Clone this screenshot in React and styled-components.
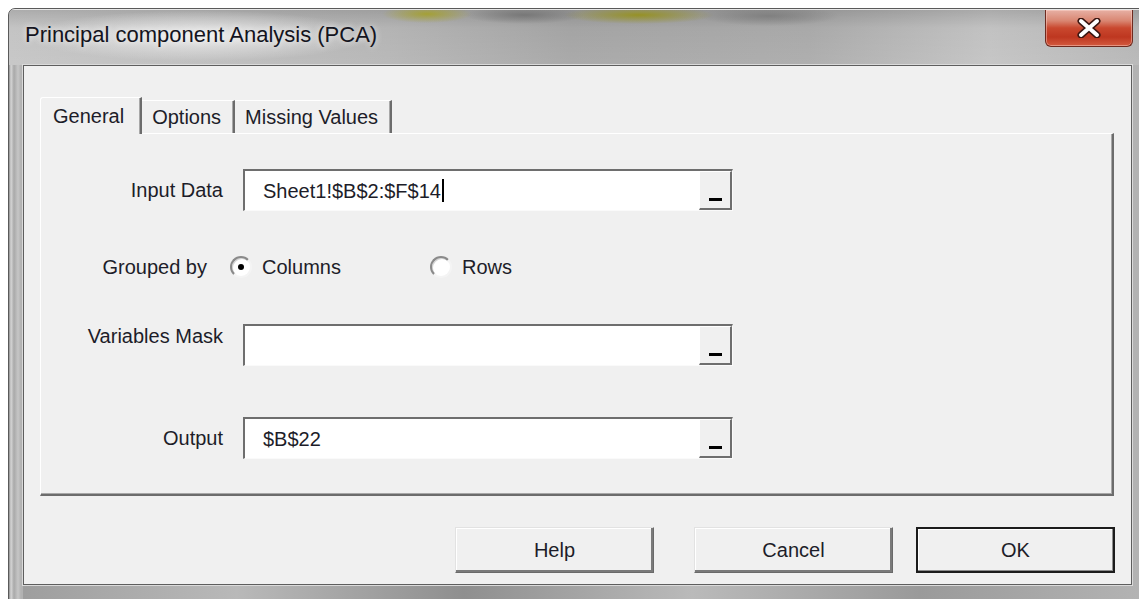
import React from "react"
import styled, {createGlobalStyle} from "styled-components"

const GlobalStyle = createGlobalStyle`
  * { box-sizing: border-box; }
  html, body {
    margin: 0;
    padding: 0;
    background: #ffffff;
    overflow: hidden;
  }
  body {
    width: 1139px;
    height: 599px;
    font-family: "Liberation Sans", Arial, sans-serif;
    color: #1d1d29;
  }
`

const Window = styled.div`
  margin: 8px 0 0 8px;
  width: 1140px;
  height: 600px;
  border: 1px solid #5a5a5a;
  border-radius: 7px 7px 0 0;
  background:
    linear-gradient(90deg, #8e8e8e 0, #d6d6d6 2px, #a9a9a9 5px, #c6c6c6 9px, #b2b2b2 12px, #b2b2b2 14px) left top / 14px 100% no-repeat,
    linear-gradient(90deg, #9c9c9c 0%, #b9b9b9 20%, #8f8f8f 40%, #bababa 60%, #9a9a9a 80%, #b4b4b4 100%);
  overflow: hidden;
`

const TitleBar = styled.div`
  height: 56px;
  display: flex;
  align-items: flex-start;
  padding-left: 16px;
  border-top: 1px solid #e8e8e8;
  background:
    radial-gradient(ellipse 230px 34px at 190px 26px, rgba(238, 238, 238, 0.95), rgba(238, 238, 238, 0) 75%),
    radial-gradient(ellipse 45px 9px at 418px 4px, rgba(165, 160, 35, 0.85), rgba(165, 160, 35, 0)),
    radial-gradient(ellipse 75px 9px at 630px 5px, rgba(150, 145, 25, 0.9), rgba(150, 145, 25, 0)),
    radial-gradient(ellipse 60px 9px at 515px 5px, rgba(105, 105, 105, 0.7), rgba(105, 105, 105, 0)),
    radial-gradient(ellipse 70px 10px at 760px 6px, rgba(110, 110, 110, 0.6), rgba(110, 110, 110, 0)),
    linear-gradient(180deg, rgba(0, 0, 0, 0.12) 0, rgba(0, 0, 0, 0) 18px, rgba(255, 255, 255, 0.08) 56px),
    linear-gradient(90deg, #c4c4c4 0, #b4b4b4 380px, #a4a4a4 560px, #a9a9a9 800px, #c2c2c2 980px, #b4b4b4 1138px);
`

const Title = styled.div`
  margin-top: 12px;
  font-size: 22px;
  line-height: 26px;
  color: #141420;
  text-shadow: 0 0 6px rgba(255, 255, 255, 0.9);
`

const CloseButton = styled.div`
  margin-left: auto;
  margin-right: 14px;
  width: 88px;
  height: 37px;
  display: flex;
  align-items: center;
  justify-content: center;
  border: 1px solid #6e2a1f;
  border-top: none;
  border-radius: 0 0 6px 6px;
  background: linear-gradient(180deg, #e7b0a4 0%, #d98672 30%, #c9482f 50%, #be3720 75%, #d35a3f 100%);
  box-shadow: inset 0 0 0 1px rgba(255, 220, 210, 0.45);
`

const Client = styled.div`
  margin-left: 14px;
  width: 1109px;
  height: 520px;
  padding: 31px 17px 0 16px;
  background: #f0f0f0;
  border: 1px solid #5e5e5e;
  box-shadow: 0 0 0 1px #dadada;
`

const TabStrip = styled.div`
  display: flex;
  align-items: flex-end;
`

const Tab = styled.div`
  position: relative;
  z-index: 1;
  display: flex;
  align-items: center;
  height: ${p => (p.$active ? "37px" : "33px")};
  margin-bottom: ${p => (p.$active ? "-1px" : "0")};
  padding: ${p => (p.$active ? "0 16px 0 12px" : "0 12px 0 10px")};
  font-size: 20px;
  background: #f0f0f0;
  border-top: 1px solid #ffffff;
  border-left: ${p => (p.$active ? "1px solid #ffffff" : "none")};
  border-right: 2px solid #6c6c6c;
  border-top-left-radius: ${p => (p.$active ? "3px" : "0")};
  box-shadow: inset -1px 0 0 #a8a8a8;
`

const Panel = styled.div`
  height: 363px;
  padding-top: 35px;
  border-top: 1px solid #ffffff;
  border-left: 1px solid #ffffff;
  border-right: 2px solid #6c6c6c;
  border-bottom: 2px solid #6c6c6c;
  box-shadow: inset -1px -1px 0 #a8a8a8;
`

const FieldRow = styled.div`
  display: flex;
  align-items: ${p => (p.$top ? "flex-start" : "center")};
  margin-top: ${p => p.$gap || 0}px;
`

const Label = styled.div`
  width: ${p => p.$width || 182}px;
  margin-right: ${p => p.$space || 20}px;
  text-align: right;
  font-size: 20px;
  line-height: 24px;
  white-space: nowrap;
`

const RefBox = styled.div`
  width: 490px;
  height: 42px;
  display: flex;
  align-items: stretch;
  background: #ffffff;
  border-top: 2px solid #6e6e6e;
  border-left: 2px solid #6e6e6e;
  border-right: 1px solid #fafafa;
  border-bottom: 1px solid #fafafa;
`

const RefText = styled.div`
  flex: 1;
  display: flex;
  align-items: center;
  padding-left: 18px;
  font-size: 20px;
  line-height: 24px;
`

const Caret = styled.span`
  display: inline-block;
  width: 2px;
  height: 23px;
  margin-left: 1px;
  background: #000000;
`

const PickButton = styled.div`
  width: 33px;
  display: flex;
  align-items: flex-end;
  justify-content: center;
  padding-bottom: 7px;
  background: #f0f0f0;
  border-top: 1px solid #ffffff;
  border-left: 1px solid #ffffff;
  border-right: 2px solid #6e6e6e;
  border-bottom: 2px solid #6e6e6e;
`

const PickBar = styled.div`
  width: 13px;
  height: 3px;
  background: #000000;
`

const Option = styled.label`
  display: flex;
  align-items: center;
  width: ${p => p.$width || 200}px;
  font-size: 20px;
  line-height: 24px;
`

const Radio = styled.span`
  position: relative;
  width: 22px;
  height: 22px;
  margin-right: 10px;
  border-radius: 50%;
  background: #ffffff;
  border: 2px solid;
  border-color: #8a8a8a #f4f4f4 #f4f4f4 #8a8a8a;
  box-shadow: inset 1px 1px 0 #d6d6d6;
  &::after {
    content: "";
    display: ${p => (p.$checked ? "block" : "none")};
    position: absolute;
    left: 6px;
    top: 6px;
    width: 6px;
    height: 6px;
    border-radius: 50%;
    background: #000000;
  }
`

const ButtonRow = styled.div`
  display: flex;
  justify-content: flex-end;
  margin-top: 31px;
  margin-right: -1px;
`

const Button = styled.div`
  width: 199px;
  height: 46px;
  margin-left: ${p => p.$space || 0}px;
  display: flex;
  align-items: center;
  justify-content: center;
  font-size: 20px;
  background: #f0f0f0;
  border: ${p => (p.$primary ? "2px solid #1c1c1c" : "1px solid")};
  border-color: ${p => (p.$primary ? "#1c1c1c" : "#e2e2e2 #6a6a6a #6a6a6a #e2e2e2")};
  box-shadow: ${p =>
    p.$primary
      ? "inset -1px -1px 0 #8c8c8c, inset 1px 1px 0 #ffffff"
      : "inset -2px -2px 0 #7a7a7a, inset 1px 1px 0 #ffffff"};
`

const CloseGlyph = () => (
  <svg width="26" height="20" viewBox="0 0 26 20">
    <path d="M5 3 L21 17 M21 3 L5 17" stroke="#3b1510" strokeWidth="7" strokeLinecap="round" />
    <path d="M5 3 L21 17 M21 3 L5 17" stroke="#ffffff" strokeWidth="4" strokeLinecap="round" />
  </svg>
)

const RefField = ({value, caret}) => (
  <RefBox>
    <RefText>
      {value}
      {caret && <Caret />}
    </RefText>
    <PickButton><PickBar /></PickButton>
  </RefBox>
)

export default function App() {
  return (
    <>
      <GlobalStyle />
      <Window>
        <TitleBar>
          <Title>Principal component Analysis (PCA)</Title>
          <CloseButton><CloseGlyph /></CloseButton>
        </TitleBar>
        <Client>
          <TabStrip>
            <Tab $active>General</Tab>
            <Tab>Options</Tab>
            <Tab>Missing Values</Tab>
          </TabStrip>
          <Panel>
            <FieldRow>
              <Label>Input Data</Label>
              <RefField value="Sheet1!$B$2:$F$14" caret />
            </FieldRow>
            <FieldRow $gap={44}>
              <Label $width={166} $space={23}>Grouped by</Label>
              <Option><Radio $checked />Columns</Option>
              <Option><Radio />Rows</Option>
            </FieldRow>
            <FieldRow $gap={45} $top>
              <Label>Variables Mask</Label>
              <RefField value="" />
            </FieldRow>
            <FieldRow $gap={51}>
              <Label>Output</Label>
              <RefField value="$B$22" />
            </FieldRow>
          </Panel>
          <ButtonRow>
            <Button>Help</Button>
            <Button $space={40}>Cancel</Button>
            <Button $space={23} $primary>OK</Button>
          </ButtonRow>
        </Client>
      </Window>
    </>
  )
}
